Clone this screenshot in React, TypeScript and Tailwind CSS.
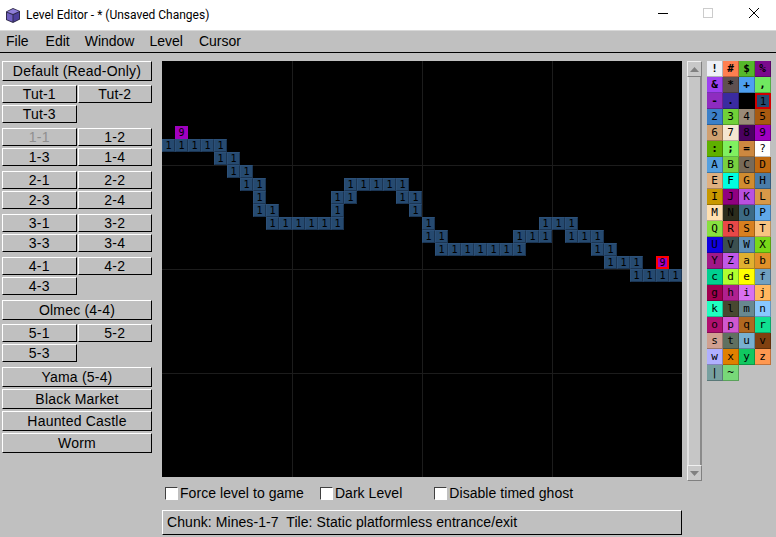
import React from "react";

const palette: [string, string][] = [
  ["!", "#eef0f6"], ["#", "#ff7f50"], ["$", "#55b82a"], ["%", "#7a0a8c"],
  ["&", "#9e40f0"], ["*", "#5f5050"], ["+", "#4d9ff0"], [",", "#70e860"],
  ["-", "#8e2cc0"], [".", "#3a2ba0"], [" ", "#000000"], ["1", "#264a70"],
  ["2", "#3c80c8"], ["3", "#70d038"], ["4", "#9a8a78"], ["5", "#a85a10"],
  ["6", "#d0a070"], ["7", "#f5e6d0"], ["8", "#4a0060"], ["9", "#a000c0"],
  [":", "#5fb000"], [";", "#80f060"], ["=", "#cc8840"], ["?", "#ffffff"],
  ["A", "#55a0e0"], ["B", "#78d040"], ["C", "#786a58"], ["D", "#c06a10"],
  ["E", "#e0b080"], ["F", "#00ffe0"], ["G", "#d08c30"], ["H", "#4a7ca8"],
  ["I", "#c89800"], ["J", "#900080"], ["K", "#b850e0"], ["L", "#d89848"],
  ["M", "#ffe0b0"], ["N", "#2c2c1c"], ["O", "#3c6a84"], ["P", "#60a8e8"],
  ["Q", "#88e040"], ["R", "#e84848"], ["S", "#d88020"], ["T", "#f8c480"],
  ["U", "#1000e0"], ["V", "#3c5050"], ["W", "#6090b8"], ["X", "#78d818"],
  ["Y", "#a01888"], ["Z", "#c058e8"], ["a", "#e0b030"], ["b", "#e09028"],
  ["c", "#00d090"], ["d", "#b0ff30"], ["e", "#ffff00"], ["f", "#70a0c0"],
  ["g", "#a00050"], ["h", "#b02090"], ["i", "#d870f0"], ["j", "#ffb860"],
  ["k", "#20ffc0"], ["l", "#484830"], ["m", "#688890"], ["n", "#88c8ff"],
  ["o", "#b01070"], ["p", "#d058d0"], ["q", "#b06820"], ["r", "#10e090"],
  ["s", "#d0a090"], ["t", "#607060"], ["u", "#78b0d0"], ["v", "#804010"],
  ["w", "#b0b0ff"], ["x", "#e08000"], ["y", "#10c860"], ["z", "#ff9850"],
  ["|", "#78a0a0"], ["~", "#78d878"],
];

const boldGlyphs = "!#$%&*,.:;-=+";

// [row, firstCol, lastCol]
const runs: [number, number, number][] = [
  [6, 0, 4], [7, 4, 5], [8, 5, 6], [9, 6, 7], [10, 7, 7], [11, 7, 8], [12, 8, 13],
  [9, 14, 18], [10, 13, 14], [10, 18, 19], [11, 13, 13], [11, 19, 19],
  [12, 20, 20], [13, 20, 21], [14, 21, 27], [13, 27, 29], [12, 29, 31], [13, 31, 33],
  [14, 33, 34], [15, 34, 36], [16, 36, 39],
];

const tiles: { r: number; c: number; ch: string; bg: string; sel?: boolean }[] = [];
runs.forEach(([r, a, b]) => {
  for (let c = a; c <= b; c++) tiles.push({ r, c, ch: "1", bg: "#264a70" });
});
tiles.push({ r: 5, c: 1, ch: "9", bg: "#a000c0" });
tiles.push({ r: 15, c: 38, ch: "9", bg: "#a000c0", sel: true });

const btn =
  "flex items-center justify-center bg-[#c0c0c0] border border-t-white border-l-white border-r-black border-b-black text-[14px] leading-none tracking-[0.2px]";

function Btn({ label, tall, disabled }: { label: string; tall?: boolean; disabled?: boolean }) {
  return (
    <div className={`${btn} ${tall ? "h-[20px]" : "h-[18px]"} ${disabled ? "text-[#8f8f8f]" : "text-black"}`}>{label}</div>
  );
}

function Pair({ a, b, disabledA }: { a: string; b?: string; disabledA?: boolean }) {
  return (
    <div className="grid grid-cols-2 gap-px">
      <Btn label={a} disabled={disabledA} />
      {b ? <Btn label={b} /> : <div />}
    </div>
  );
}

function Check({ label, className }: { label: string; className: string }) {
  return (
    <div className={`flex items-center ${className}`}>
      <div className="w-[13px] h-[13px] bg-white border border-t-[#404040] border-l-[#404040] border-r-white border-b-white" />
      <span className="ml-[2px] mb-[2px] text-[14px] leading-none tracking-[0.05px]">{label}</span>
    </div>
  );
}

function Arrow({ up }: { up?: boolean }) {
  return (
    <div className="h-[16px] flex items-center justify-center bg-[#c8c8c8] border border-t-[#f0f0f0] border-l-[#f0f0f0] border-r-[#808080] border-b-[#808080]">
      <svg width="9" height="5" viewBox="0 0 9 5">
        <path d={up ? "M4.5 0L9 5H0Z" : "M0 0H9L4.5 5Z"} fill="#808080" />
      </svg>
    </div>
  );
}

export default function App() {
  return (
    <div
      className="w-[776px] h-[537px] flex flex-col bg-[#c0c0c0] text-black overflow-hidden"
      style={{ fontFamily: '"Liberation Sans", Arial, sans-serif' }}
    >
      {/* Title bar */}
      <div className="h-[30px] bg-white flex items-center shrink-0">
        <svg className="ml-[5px]" width="16" height="17" viewBox="0 0 16 17">
          <path d="M1 4.5L8 1L15 4V12.5L8 16L1 13Z" fill="#2f2a4a" />
          <path d="M2 4.7L8 2L14 4.2L8 7Z" fill="#8f7fd8" />
          <path d="M2 5.7L7.5 8V14.7L2 12.5Z" fill="#6f5fc0" />
          <path d="M8.5 8L14 5.2V12L8.5 14.8Z" fill="#4d3f9a" />
        </svg>
        <span className="ml-[5px] text-[12px] leading-none" style={{ fontFamily: "Roboto, sans-serif" }}>
          Level Editor - * (Unsaved Changes)
        </span>
        <div className="ml-auto flex items-center">
          <svg width="12" height="12" viewBox="0 0 12 12" className="mr-[33px] mb-[4px]">
            <path d="M1 6.5H11" stroke="#000" strokeWidth="1" />
          </svg>
          <svg width="12" height="12" viewBox="0 0 12 12" className="mr-[34px] mb-[4px]">
            <rect x="1.5" y="1.5" width="9" height="9" fill="none" stroke="#cccccc" />
          </svg>
          <svg width="12" height="12" viewBox="0 0 12 12" className="mr-[16px] mb-[4px]">
            <path d="M1 1L11 11M11 1L1 11" stroke="#000" strokeWidth="1" />
          </svg>
        </div>
      </div>

      {/* Menu bar */}
      <div className="h-[23px] shrink-0 flex items-center pl-[6px] pb-[2px] border-b border-b-black border-t border-t-[#d8d8d8] text-[14px] leading-none">
        <span>File</span>
        <span className="ml-[17px]">Edit</span>
        <span className="ml-[15px]">Window</span>
        <span className="ml-[15px]">Level</span>
        <span className="ml-[16px]">Cursor</span>
      </div>

      <div className="flex items-start pt-[8px]">
        {/* Left column */}
        <div className="w-[150px] ml-[2px] shrink-0 flex flex-col">
          <Btn label="Default (Read-Only)" tall />
          <div className="mt-[4px] flex flex-col gap-[2px]">
            <Pair a="Tut-1" b="Tut-2" />
            <Pair a="Tut-3" />
          </div>
          <div className="mt-[5px] flex flex-col gap-[2px]">
            <Pair a="1-1" b="1-2" disabledA />
            <Pair a="1-3" b="1-4" />
          </div>
          <div className="mt-[5px] flex flex-col gap-[2px]">
            <Pair a="2-1" b="2-2" />
            <Pair a="2-3" b="2-4" />
          </div>
          <div className="mt-[5px] flex flex-col gap-[2px]">
            <Pair a="3-1" b="3-2" />
            <Pair a="3-3" b="3-4" />
          </div>
          <div className="mt-[5px] flex flex-col gap-[2px]">
            <Pair a="4-1" b="4-2" />
            <Pair a="4-3" />
          </div>
          <div className="mt-[5px]">
            <Btn label="Olmec (4-4)" tall />
          </div>
          <div className="mt-[4px] flex flex-col gap-[2px]">
            <Pair a="5-1" b="5-2" />
            <Pair a="5-3" />
          </div>
          <div className="mt-[5px] flex flex-col gap-[2px]">
            <Btn label="Yama (5-4)" tall />
            <Btn label="Black Market" tall />
            <Btn label="Haunted Castle" tall />
            <Btn label="Worm" tall />
          </div>
        </div>

        {/* Center */}
        <div className="ml-[10px] w-[520px] shrink-0 flex flex-col">
          <div
            className="relative w-[520px] h-[416px] bg-black grid overflow-hidden"
            style={{ gridTemplateColumns: "repeat(40, 13px)", gridTemplateRows: "repeat(32, 13px)" }}
          >
            {[130, 260, 390].map((x) => (
              <div key={x} className="absolute top-0 bottom-0 w-px bg-[#1c1c1c]" style={{ left: x }} />
            ))}
            {[104, 208, 312].map((y) => (
              <div key={y} className="absolute left-0 right-0 h-px bg-[#1c1c1c]" style={{ top: y }} />
            ))}
            {tiles.map((t, i) => (
              <div
                key={i}
                className={`relative flex items-center justify-center text-[10px] leading-none text-black border ${
                  t.sel ? "border-[#ff0000] border-2" : t.bg === "#264a70" ? "border-t-[#2c5078] border-l-[#2c5078] border-r-[#1b3553] border-b-[#1b3553]" : "border-transparent"
                }`}
                style={{
                  gridColumnStart: t.c + 1,
                  gridRowStart: t.r + 1,
                  backgroundColor: t.bg,
                  fontFamily: '"DejaVu Sans Mono", monospace',
                }}
              >
                {t.ch}
              </div>
            ))}
          </div>

          {/* Checkboxes */}
          <div className="flex items-center h-[33px]">
            <Check label="Force level to game" className="ml-[3px]" />
            <Check label="Dark Level" className="ml-[16px]" />
            <Check label="Disable timed ghost" className="ml-[32px]" />
          </div>

          {/* Status */}
          <div className="h-[25px] flex items-center pl-[4px] pb-[2px] bg-[#c0c0c0] border border-t-white border-l-white border-r-black border-b-black text-[14px] leading-none tracking-[0.07px] whitespace-pre">
            Chunk: Mines-1-7  Tile: Static platformless entrance/exit
          </div>
        </div>

        {/* Scrollbar */}
        <div className="ml-[5px] w-[15px] h-[420px] shrink-0 flex flex-col">
          <Arrow up />
          <div className="flex-1 border-l-2 border-l-[#e2e2e2] border-r-2 border-r-[#8a8a8a] bg-[#c6c6c6]" />
          <Arrow />
        </div>

        {/* Palette */}
        <div className="ml-[5px] grid grid-cols-4 w-[64px] shrink-0">
          {palette.map(([ch, bg], i) => (
            <div
              key={i}
              className={`h-[16px] flex items-center justify-center text-[11px] leading-none text-black ${
                ch === "1" ? "border-2 border-[#d00000]" : "border-b border-r border-black/25"
              } ${boldGlyphs.includes(ch) ? "font-bold" : ""}`}
              style={{ backgroundColor: bg, fontFamily: '"DejaVu Sans Mono", monospace' }}
            >
              {ch}
            </div>
          ))}
        </div>
      </div>
    </div>
  );
}
